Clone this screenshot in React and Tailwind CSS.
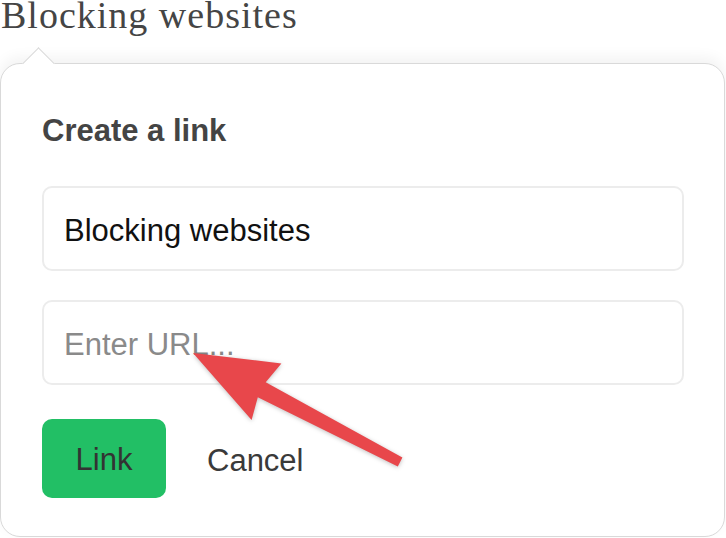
import { useState } from 'react';

function PointerArrow() {
  return (
    <svg
      className="pointer-events-none absolute left-0 top-0"
      width="726"
      height="538"
      viewBox="0 0 726 538"
    >
      <polygon
        points="193,353 281.4,363.4 265.7,382.2 402.4,457.6 397.8,466.4 257.8,397.3 251.6,420"
        fill="#e8474b"
        style={{ filter: 'drop-shadow(0 1px 2px rgba(0,0,0,0.25))' }}
      />
    </svg>
  );
}

export default function App() {
  const [title, setTitle] = useState('Blocking websites');
  const [url, setUrl] = useState('');

  return (
    <div className="relative h-[538px] w-[726px] overflow-hidden bg-white">
      <h1 className="-mt-[4px] pl-[1px] font-['Liberation_Serif',serif] text-[38px] leading-[38px] tracking-[1px] text-[#454545]">
        Blocking websites
      </h1>

      <div className="relative mt-[29px] h-[474px] w-[725px] rounded-[20px] border border-[#d9d9d9] bg-white px-[41px] pt-[48px] font-['Liberation_Sans',Arial,sans-serif] shadow-[0_-6px_14px_rgba(0,0,0,0.05)]">
        <div className="absolute -top-[12px] left-[26px] h-[23px] w-[23px] rotate-45 border-l border-t border-[#d9d9d9] bg-white" />

        <h2 className="text-[31px] font-bold leading-[37px] text-[#444]">Create a link</h2>

        <form className="mt-[37px] flex flex-col" onSubmit={(event) => event.preventDefault()}>
          <input
            type="text"
            value={title}
            onChange={(event) => setTitle(event.target.value)}
            className="h-[85px] w-[642px] rounded-[10px] border-2 border-[#ececec] px-[20px] pt-[4px] text-[31px] text-[#111] outline-none"
          />
          <input
            type="text"
            value={url}
            onChange={(event) => setUrl(event.target.value)}
            placeholder="Enter URL..."
            className="mt-[29px] h-[85px] w-[642px] rounded-[10px] border-2 border-[#ececec] px-[20px] pt-[4px] text-[31px] text-[#111] placeholder-[#8a8a8a] outline-none"
          />

          <div className="mt-[34px] flex items-center">
            <button
              type="submit"
              className="h-[79px] w-[124px] rounded-[10px] bg-[#22bf65] pt-[4px] text-[31px] text-[#333]"
            >
              Link
            </button>
            <button type="button" className="ml-[41px] pt-[6px] text-[31px] text-[#3a3a3a]">
              Cancel
            </button>
          </div>
        </form>
      </div>

      <PointerArrow />
    </div>
  );
}
